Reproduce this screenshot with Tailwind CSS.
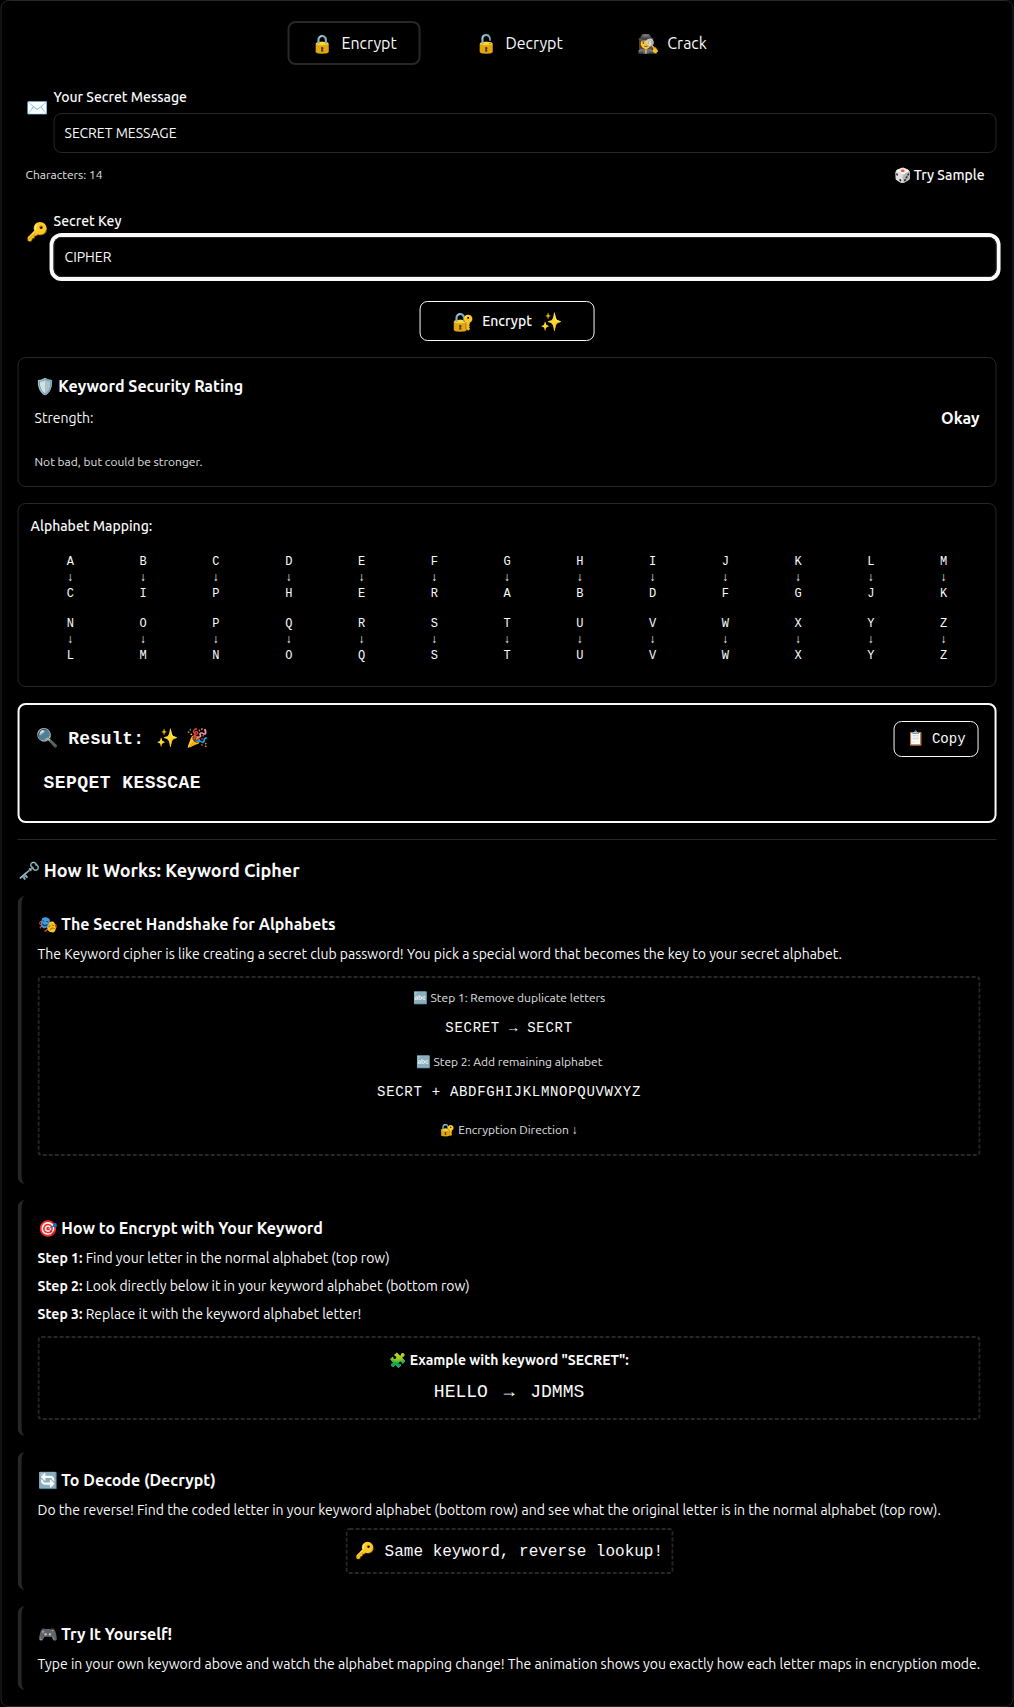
<!DOCTYPE html>
<html lang="en">
<head>
<meta charset="utf-8">
<title>Keyword Cipher</title>
<script src="https://cdn.jsdelivr.net/npm/@tailwindcss/browser@4"></script>
</head>
<body class="bg-black text-[#fafafa] font-['Ubuntu','Noto_Sans',sans-serif] overflow-hidden">
<main class="w-[1013px] h-[1707px] translate-x-[0.55px] border border-zinc-800 rounded-lg p-4">

  <nav class="flex pl-[269.8px] pt-1 text-base">
    <button class="flex h-11 w-[133.5px] items-center justify-center gap-2 rounded-lg border-2 border-zinc-800"><span class="text-lg">🔒</span>Encrypt</button>
    <button class="ml-[30.5px] flex h-11 w-[135.5px] items-center justify-center gap-2"><span class="text-lg">🔓</span>Decrypt</button>
    <button class="ml-[26.5px] flex h-11 w-[117.5px] items-center justify-center gap-2"><span class="text-lg">🕵️‍♀️</span>Crack</button>
  </nav>

  <div class="mt-[22px] flex gap-1 pl-2">
    <span class="-ml-px mr-px mt-1.5 w-6 text-center text-lg">✉️</span>
    <div class="flex-1">
      <label class="block text-sm font-medium">Your Secret Message</label>
      <div class="mt-1.5 flex h-10 items-center rounded-lg border border-zinc-800 px-2.5 text-sm">SECRET MESSAGE</div>
    </div>
  </div>
  <div class="mt-1 flex h-9 items-center justify-between pl-2 pr-3">
    <span class="text-xs text-[#e1e1e1]">Characters: 14</span>
    <button class="text-sm font-medium">🎲 Try Sample</button>
  </div>

  <div class="mt-[18px] flex gap-1 pl-2">
    <span class="-ml-px mr-px mt-1.5 w-6 text-center text-lg">🔑</span>
    <div class="flex-1">
      <label class="block text-sm font-medium">Secret Key</label>
      <div class="mt-1.5 flex h-10 items-center rounded-lg border border-zinc-800 px-2.5 text-sm ring-4 ring-[#fafafa]">CIPHER</div>
    </div>
  </div>

  <div class="mt-6 flex justify-center">
    <button class="flex h-10 items-center gap-2 rounded-lg border border-[#fafafa] px-8 text-sm font-medium"><span class="text-lg">🔐</span>Encrypt<span class="text-lg">✨</span></button>
  </div>

  <section class="mt-4 h-[130px] rounded-lg border border-zinc-800 p-4">
    <h4 class="text-base font-semibold">🛡️ Keyword Security Rating</h4>
    <div class="mt-2 flex items-center justify-between"><span class="text-sm">Strength:</span><span class="text-base font-semibold">Okay</span></div>
    <p class="mt-6 text-xs text-[#e1e1e1]">Not bad, but could be stronger.</p>
  </section>

  <section class="mt-4 h-[184px] rounded-lg border border-zinc-800 p-3">
    <h4 class="text-sm font-medium">Alphabet Mapping:</h4>
    <div id="mapping" class="mt-[18px] grid grid-cols-13 gap-x-2 gap-y-[14px] px-[7.5px] text-center font-['Liberation_Mono',monospace] text-xs"></div>
  </section>

  <section class="mt-4 h-[120px] rounded-lg border-2 border-[#fafafa] p-4 font-['Liberation_Mono',monospace]">
    <div class="flex h-9 items-center justify-between">
      <h3 class="flex text-lg font-bold"><span>🔍 Result:</span><span class="ml-3">✨</span><span class="ml-2">🎉</span></h3>
      <button class="h-9 rounded-lg border border-[#fafafa] px-3 text-sm">📋 Copy</button>
    </div>
    <p class="mt-1 p-2 text-lg font-bold tracking-wide">SEPQET KESSCAE</p>
  </section>

  <section class="mt-4 border-t border-zinc-800 pt-4">
    <h3 class="text-lg font-semibold">🗝️ How It Works: Keyword Cipher</h3>

    <article class="mt-3 h-72 rounded-lg border-l-4 border-zinc-800 p-4">
      <h4 class="text-base font-semibold">🎭 The Secret Handshake for Alphabets</h4>
      <p class="mt-2 text-sm">The Keyword cipher is like creating a secret club password! You pick a special word that becomes the key to your secret alphabet.</p>
      <div class="relative mt-3 h-[180px] p-3.5 text-center">
        <svg class="absolute inset-0 size-full fill-none stroke-zinc-800 stroke-2"><rect x="1" y="1" rx="3" stroke-dasharray="4 2" class="w-[calc(100%-2px)] h-[calc(100%-2px)]"/></svg>
        <p class="text-xs text-[#e1e1e1]">🔤 Step 1: Remove duplicate letters</p>
        <p class="mt-3 font-['Liberation_Mono',monospace] text-sm tracking-wider">SECRET → SECRT</p>
        <p class="mt-4 text-xs text-[#e1e1e1]">🔤 Step 2: Add remaining alphabet</p>
        <p class="mt-3 font-['Liberation_Mono',monospace] text-sm tracking-wider">SECRT + ABDFGHIJKLMNOPQUVWXYZ</p>
        <p class="mt-5 text-xs text-[#e1e1e1]">🔐 Encryption Direction ↓</p>
      </div>
    </article>

    <article class="mt-4 h-[236px] rounded-lg border-l-4 border-zinc-800 p-4">
      <h4 class="text-base font-semibold">🎯 How to Encrypt with Your Keyword</h4>
      <div class="mt-2 space-y-2 text-sm">
        <p><strong class="font-bold">Step 1:</strong> Find your letter in the normal alphabet (top row)</p>
        <p><strong class="font-bold">Step 2:</strong> Look directly below it in your keyword alphabet (bottom row)</p>
        <p><strong class="font-bold">Step 3:</strong> Replace it with the keyword alphabet letter!</p>
      </div>
      <div class="relative mt-3 h-[84px] p-3.5 text-center">
        <svg class="absolute inset-0 size-full fill-none stroke-zinc-800 stroke-2"><rect x="1" y="1" rx="3" stroke-dasharray="4 2" class="w-[calc(100%-2px)] h-[calc(100%-2px)]"/></svg>
        <p class="text-sm font-semibold">🧩 Example with keyword "SECRET":</p>
        <p class="mt-2 font-['Liberation_Mono',monospace] text-lg">HELLO <span class="mx-[5px]">→</span> JDMMS</p>
      </div>
    </article>

    <article class="mt-4 h-[138px] rounded-lg border-l-4 border-zinc-800 p-4">
      <h4 class="text-base font-semibold">🔄 To Decode (Decrypt)</h4>
      <p class="mt-2 text-sm">Do the reverse! Find the coded letter in your keyword alphabet (bottom row) and see what the original letter is in the normal alphabet (top row).</p>
      <div class="mt-2 flex justify-center">
        <div class="relative h-[46px] w-[328px] pt-[11px] text-center font-['Liberation_Mono',monospace] text-base leading-[26px]">
          <svg class="absolute inset-0 size-full fill-none stroke-zinc-800 stroke-2"><rect x="1" y="1" rx="3" stroke-dasharray="4 2" class="w-[calc(100%-2px)] h-[calc(100%-2px)]"/></svg>
          🔑 Same keyword, reverse lookup!
        </div>
      </div>
    </article>

    <article class="mt-4 h-[84px] rounded-lg border-l-4 border-zinc-800 p-4">
      <h4 class="text-base font-semibold">🎮 Try It Yourself!</h4>
      <p class="mt-2 text-sm">Type in your own keyword above and watch the alphabet mapping change! The animation shows you exactly how each letter maps in encryption mode.</p>
    </article>
  </section>
</main>
<script>
  const plain = 'ABCDEFGHIJKLMNOPQRSTUVWXYZ';
  const cipher = 'CIPHERABDFGJKLMNOQSTUVWXYZ';
  document.getElementById('mapping').innerHTML = [...plain].map((c, i) =>
    `<div><div>${c}</div><div>↓</div><div>${cipher[i]}</div></div>`).join('');
</script>
</body>
</html>
